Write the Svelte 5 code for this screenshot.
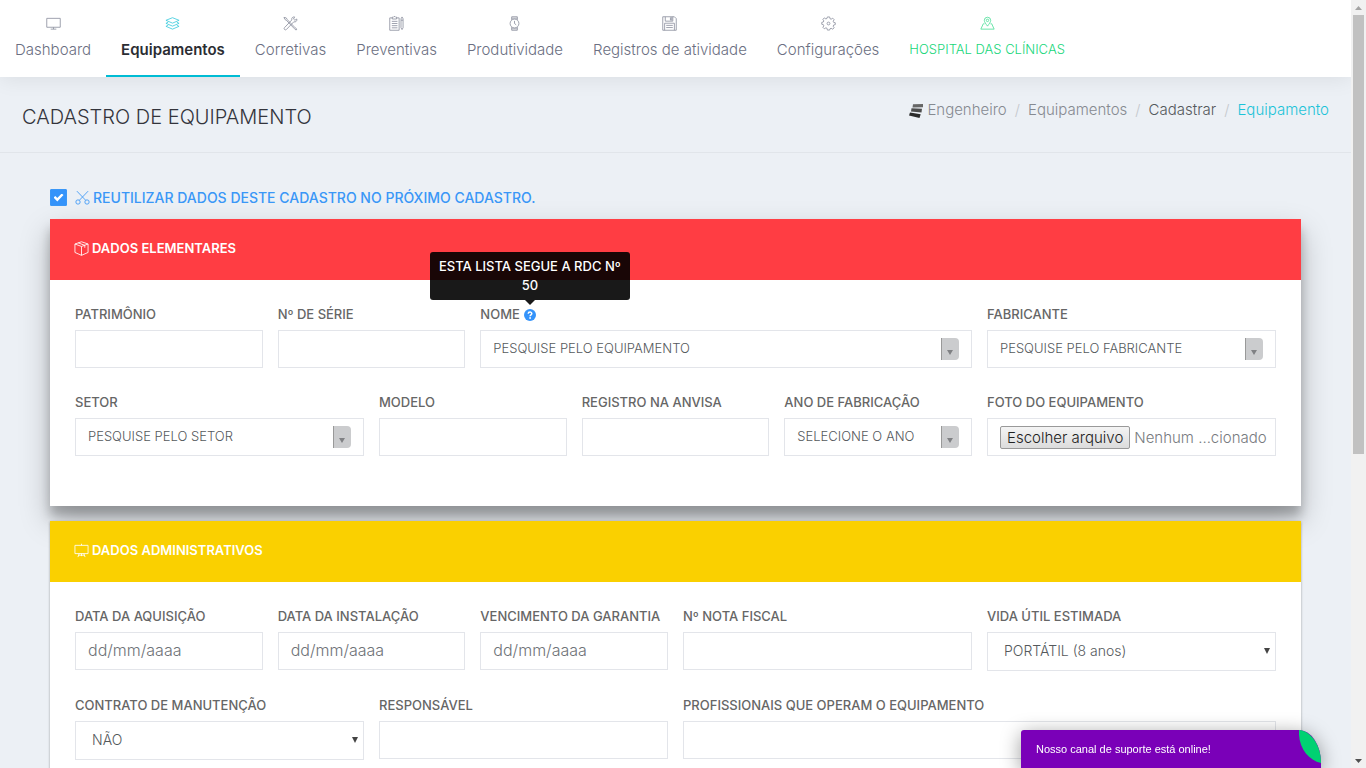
<script lang="ts">
  type Kind = "text" | "date" | "search" | "select" | "file";

  interface Field {
    id: string;
    label: string;
    span: number;
    kind: Kind;
    value?: string;
    help?: string;
  }

  interface Section {
    title: string;
    icon: string;
    tone: string;
    rows: Field[][];
  }

  const menu = [
    { label: "Dashboard", icon: "monitor" },
    { label: "Equipamentos", icon: "layers", active: true },
    { label: "Corretivas", icon: "tools" },
    { label: "Preventivas", icon: "notepad" },
    { label: "Produtividade", icon: "watch" },
    { label: "Registros de atividade", icon: "disk" },
    { label: "Configurações", icon: "gear" },
    { label: "HOSPITAL DAS CLÍNICAS", icon: "pin", place: true },
  ];

  const sections: Section[] = [
    {
      title: "DADOS ELEMENTARES",
      icon: "box",
      tone: "danger",
      rows: [
        [
          { id: "patrimonio", label: "PATRIMÔNIO", span: 2, kind: "text" },
          { id: "serie", label: "Nº DE SÉRIE", span: 2, kind: "text" },
          { id: "nome", label: "NOME", span: 5, kind: "search", value: "PESQUISE PELO EQUIPAMENTO", help: "ESTA LISTA SEGUE A RDC Nº 50" },
          { id: "fabricante", label: "FABRICANTE", span: 3, kind: "search", value: "PESQUISE PELO FABRICANTE" },
        ],
        [
          { id: "setor", label: "SETOR", span: 3, kind: "search", value: "PESQUISE PELO SETOR" },
          { id: "modelo", label: "MODELO", span: 2, kind: "text" },
          { id: "anvisa", label: "REGISTRO NA ANVISA", span: 2, kind: "text" },
          { id: "ano", label: "ANO DE FABRICAÇÃO", span: 2, kind: "search", value: "SELECIONE O ANO" },
          { id: "foto", label: "FOTO DO EQUIPAMENTO", span: 3, kind: "file" },
        ],
      ],
    },
    {
      title: "DADOS ADMINISTRATIVOS",
      icon: "easel",
      tone: "warning",
      rows: [
        [
          { id: "aquisicao", label: "DATA DA AQUISIÇÃO", span: 2, kind: "date" },
          { id: "instalacao", label: "DATA DA INSTALAÇÃO", span: 2, kind: "date" },
          { id: "garantia", label: "VENCIMENTO DA GARANTIA", span: 2, kind: "date" },
          { id: "nota", label: "Nº NOTA FISCAL", span: 3, kind: "text" },
          { id: "vida", label: "VIDA ÚTIL ESTIMADA", span: 3, kind: "select", value: "PORTÁTIL (8 anos)" },
        ],
        [
          { id: "contrato", label: "CONTRATO DE MANUTENÇÃO", span: 3, kind: "select", value: "NÃO" },
          { id: "responsavel", label: "RESPONSÁVEL", span: 3, kind: "text" },
          { id: "profissionais", label: "PROFISSIONAIS QUE OPERAM O EQUIPAMENTO", span: 6, kind: "text" },
        ],
      ],
    },
  ];

  let reuse = $state(true);
</script>

{#snippet icon(name: string)}
  <svg class="icon" viewBox="0 0 16 16" fill="none" stroke="currentColor" stroke-width="0.9" aria-hidden="true">
    {#if name === "monitor"}
      <path d="M0.8 2.5h14.4v9.5H0.8zM8 12v2M5 14h6" />
    {:else if name === "layers"}
      <path d="M8 1.8l7 2.8-7 3-7-3z" />
      <path d="M3.4 6.6L1 7.8l7 3 7-3-2.4-1.2M3.4 9.9L1 11l7 3 7-3-2.4-1.1" />
    {:else if name === "tools"}
      <path d="M1 1.5l2.4.5 1.3 2L13 12.6 14.8 14 14 15l-1.8-1.4L4 5 2 3.6z" />
      <path d="M14.7 3.2l-2 1.3-1.5-1.3L12.4 1c-2-.4-3.7 1.3-3 3.2L1.6 12.4c-1.3 1.3.7 3.3 2 2l7.9-8.2c2 .7 3.8-1 3.2-3z" />
    {:else if name === "notepad"}
      <path d="M3.5 2H.8v13.2h10V2H8M3.5 1.2h1.2L5.4.5h1l.7.7h1v2H3.5z" />
      <path d="M3 5.7h6M3 8h6M3 10.3h6M3 12.6h6M12.8 3l1.1-2L15 3v9.5l-1.1 2-1.1-2zM12.8 4.5H15" />
    {:else if name === "watch"}
      <circle cx="8" cy="8" r="4.7" />
      <path d="M5 4.2V.8h6v3.4M5 11.8v3.4h6v-3.4M8 5.2V8l1.8 1.4M5 2.3h6M5 13.7h6" />
    {:else if name === "disk"}
      <path d="M.8.8h12.4l2 2v12.4H.8zM3.5.8v4.7h8V.8M9 1.8h1.4v2.6H9zM2.8 15.2V7.7h10.4v7.5M4.5 10h7M4.5 12.3h7" />
    {:else if name === "gear"}
      <path d="M6.8 1h2.4l.4 1.9 1.2.5 1.7-1.1 1.5 1.6-1 1.7.5 1.2 1.7.4v2l-1.7.4-.5 1.3 1 1.6-1.5 1.6-1.7-1-1.2.5L9.2 15H6.8l-.4-1.9-1.2-.5-1.7 1L2 12.1l1-1.6-.5-1.3L.8 8.8v-2l1.7-.4L3 5.2 2 3.6 3.5 2l1.7 1.1 1.2-.5z" />
      <circle cx="8" cy="8" r="1.5" />
    {:else if name === "pin"}
      <path d="M8 10.8C6.3 8.4 4.6 6.5 4.6 4.7a3.4 3.4 0 0 1 6.8 0C11.4 6.5 9.7 8.4 8 10.8z" />
      <circle cx="8" cy="4.7" r="1.3" />
      <path d="M4.8 8.3H3.5L.9 14h14.2l-2.6-5.7h-1.3" />
    {:else if name === "box"}
      <path d="M8 .8l7 2.4v9L8 15.3l-7-3.1v-9zM1 3.2l7 2.6 7-2.6M8 5.8v9.5M4.5 2l7 2.6v2.6" />
    {:else if name === "easel"}
      <path d="M1 2.5h14v8.8H1zM8 .8v1.7M5.5 11.3L4.2 15M8 11.3V14M10.5 11.3l1.3 3.7M5 13h6" />
    {:else if name === "scissors"}
      <circle cx="3.2" cy="12.8" r="2.3" />
      <circle cx="12.8" cy="12.8" r="2.3" />
      <path d="M4.6 11L14 1.2M11.4 11L2 1.2" />
    {/if}
  </svg>
{/snippet}

<div class="window">
  <div class="page">
    <nav class="menu" aria-label="Principal">
      {#each menu as item}
        <a href="#{item.icon}" class:active={item.active} class:place={item.place}>
          {@render icon(item.icon)}
          <span>{item.label}</span>
        </a>
      {/each}
    </nav>

    <header class="page-header">
      <h1>CADASTRO DE EQUIPAMENTO</h1>
      <ol class="breadcrumb">
        <li>
          <a href="#engenheiro">
            <svg class="brand" viewBox="0 0 14 14" aria-hidden="true">
              <path d="M4 .2L14 0v3.2L3.5 3.4z" fill="#666" />
              <path d="M2.500 4.200l10.500.6-.5 3.600L2 7.400z" fill="#4c4c4c" />
              <path d="M1 8.400L11.700 10.200 10.500 14 0 11.500z" fill="#2b2b2b" />
            </svg>
            Engenheiro
          </a>
        </li>
        <li><a href="#equipamentos">Equipamentos</a></li>
        <li class="dark">Cadastrar</li>
        <li class="current" aria-current="page">Equipamento</li>
      </ol>
    </header>

    <main>
      <label class="reuse">
        <input type="checkbox" bind:checked={reuse} />
        {@render icon("scissors")}
        <span>REUTILIZAR DADOS DESTE CADASTRO NO PRÓXIMO CADASTRO.</span>
      </label>

      {#each sections as section}
        <section class="card {section.tone}">
          <h2>
            {@render icon(section.icon)}
            {section.title}
          </h2>
          <div class="card-body">
            {#each section.rows as row}
              <div class="row">
                {#each row as field}
                  <div class="field span-{field.span}">
                    <div class="caption">
                      <label for={field.id}>{field.label}</label>
                      {#if field.help}
                        <button type="button" class="help" aria-describedby="{field.id}-tip" aria-label="Ajuda">
                          <svg viewBox="0 0 12 12" aria-hidden="true">
                            <circle cx="6" cy="6" r="6" fill="currentColor" />
                            <path d="M4.2 4.7C4.3 2.6 7.8 2.6 7.8 4.6 7.8 5.9 6.1 5.8 6.1 7.2" fill="none" stroke="#fff" stroke-width="1.5" />
                            <circle cx="6.1" cy="9" r="0.9" fill="#fff" />
                          </svg>
                          <span class="tooltip" role="tooltip" id="{field.id}-tip">{field.help}</span>
                        </button>
                      {/if}
                    </div>
                    {#if field.kind === "search" || field.kind === "select"}
                      <div class="picker {field.kind}">
                        <select id={field.id} class="control">
                          <option>{field.value}</option>
                        </select>
                        <span class="arrow"></span>
                      </div>
                    {:else if field.kind === "file"}
                      <div class="control file">
                        <input id={field.id} type="file" />
                        <label class="file-button" for={field.id}>Escolher arquivo</label>
                        <span>Nenhum ...cionado</span>
                      </div>
                    {:else}
                      <input
                        id={field.id}
                        class="control"
                        type="text"
                        placeholder={field.kind === "date" ? "dd/mm/aaaa" : undefined}
                      />
                    {/if}
                  </div>
                {/each}
              </div>
            {/each}
          </div>
        </section>
      {/each}
    </main>
  </div>

  <div class="scrollbar" aria-hidden="true">
    <span class="up"></span>
    <span class="thumb"></span>
    <span class="down"></span>
  </div>

  <button type="button" class="chat">
    Nosso canal de suporte está online!
    <svg viewBox="0 0 22 33" aria-hidden="true">
      <path d="M0 0C12 1 22 15 22 33C9 30 -1 17 0 0z" fill="#00d172" />
    </svg>
  </button>
</div>

<style>
  :global(body) {
    background: #ecf0f5;
  }

  .window {
    display: flex;
    height: 100vh;
    overflow: hidden;
    font: 300 14px/21px Inter, "Open Sans", sans-serif;
    color: #55595c;
  }
  .window *,
  .window *::before {
    box-sizing: border-box;
  }
  .page {
    flex: 1;
    min-width: 0;
    overflow: auto;
    scrollbar-width: none;
  }
  a {
    color: inherit;
    text-decoration: none;
  }
  .icon {
    width: 15px;
    height: 15px;
    flex: none;
  }

  .menu {
    display: flex;
    height: 77px;
    background: #fff;
    box-shadow: 0 2px 20px rgba(0, 0, 0, 0.08);
    position: relative;
  }
  .menu a {
    display: flex;
    flex-direction: column;
    align-items: center;
    gap: 8px;
    padding: 16px 15px 0;
    border-bottom: 2px solid transparent;
    color: #6b6f82;
    font-size: 15px;
    white-space: nowrap;
  }
  .menu .icon {
    opacity: 0.75;
  }
  .menu .active {
    border-color: #00bcd4;
    color: #2b2d33;
    font-weight: 600;
  }
  .menu .active .icon {
    color: #00bcd4;
  }
  .menu .place {
    color: #16d67a;
    font-size: 13px;
  }

  .page-header {
    display: flex;
    justify-content: space-between;
    height: 76px;
    padding: 22px;
    border-bottom: 1px solid #e1e5ea;
  }
  h1 {
    margin: 0;
    font-size: 20px;
    line-height: 36px;
    font-weight: 300;
    color: #33343c;
  }
  .breadcrumb {
    display: flex;
    margin: 0;
    padding: 0;
    list-style: none;
    font-size: 15px;
    color: #868a91;
  }
  .breadcrumb li + li::before {
    content: "/";
    padding: 0 8px;
    color: #c5c8cd;
  }
  .breadcrumb .dark {
    color: #55595c;
  }
  .breadcrumb .current {
    color: #1cc3d8;
  }
  .brand {
    width: 14px;
    height: 14px;
    vertical-align: -3px;
  }

  main {
    padding: 34px 50px;
  }
  .reuse {
    display: flex;
    align-items: center;
    gap: 3px;
    width: fit-content;
    margin-bottom: 11px;
    color: #3a97f7;
    font-weight: 500;
  }
  .reuse input {
    appearance: none;
    width: 17px;
    height: 17px;
    margin: 0 5px 0 0;
    border: 1px solid #3a97f7;
    border-radius: 1px;
    background: #fff;
  }
  .reuse input:checked {
    display: grid;
    place-items: center;
    background: #3493fa;
  }
  .reuse input:checked::before {
    content: "";
    width: 10px;
    height: 8px;
    background: #fff;
    clip-path: polygon(0 50%, 18% 30%, 38% 55%, 82% 0, 100% 20%, 38% 100%);
  }

  .card {
    margin-bottom: 15px;
    background: #fff;
    box-shadow: 0 1px 3px rgba(0, 0, 0, 0.12), 0 1px 2px rgba(0, 0, 0, 0.24);
  }
  .card.danger {
    box-shadow: 0 14px 28px rgba(0, 0, 0, 0.25), 0 10px 10px rgba(0, 0, 0, 0.22);
  }
  .card.warning {
    position: relative;
  }
  h2 {
    display: flex;
    align-items: center;
    gap: 3px;
    margin: 0;
    padding: 19px 24px 21px;
    font-size: 13px;
    line-height: 21px;
    font-weight: 600;
    color: #fff;
  }
  .danger h2 {
    background: #ff3d43;
  }
  .warning h2 {
    background: #fad000;
  }
  .card-body {
    display: grid;
    gap: 24px;
    padding: 24px 25px 50px;
  }
  .row {
    display: grid;
    grid-template-columns: repeat(12, minmax(0, 1fr));
    gap: 15px;
  }
  .span-2 {
    grid-column: span 2;
  }
  .span-3 {
    grid-column: span 3;
  }
  .span-5 {
    grid-column: span 5;
  }
  .span-6 {
    grid-column: span 6;
  }
  .caption {
    display: flex;
    align-items: center;
    gap: 4px;
    margin-bottom: 5px;
    font-size: 13px;
    font-weight: 500;
    color: #666;
    white-space: nowrap;
  }

  .control {
    display: block;
    width: 100%;
    height: 38px;
    padding: 0 12px 2px;
    border: 1px solid #e3e5ea;
    border-radius: 0;
    background: #fff;
    font: inherit;
    color: inherit;
  }
  input.control {
    font-size: 16px;
  }
  .control::placeholder {
    color: #6f7378;
    opacity: 1;
  }
  .picker {
    position: relative;
  }
  .picker .control {
    appearance: none;
  }
  .search .control {
    font-size: 13px;
  }
  .select .control {
    height: 39px;
    padding: 0 16px 2px;
  }
  .arrow {
    position: absolute;
    pointer-events: none;
  }
  .arrow::before {
    content: "";
    display: block;
    width: 6px;
    height: 6px;
    background: #444;
    clip-path: polygon(0 0, 100% 0, 50% 100%);
  }
  .select .arrow {
    top: 16px;
    right: 6px;
  }
  .search .arrow {
    top: 8px;
    right: 13px;
    width: 18px;
    height: 22px;
    padding: 12px 5px 0;
    border-left: 1px solid #999;
    border-radius: 0 4px 4px 0;
    background: #cbccce;
  }
  .search .arrow::before {
    height: 5px;
    background: #808184;
  }

  .file {
    display: flex;
    align-items: center;
    gap: 4px;
    position: relative;
    padding: 0 12px;
    font-size: 15px;
    color: #777b80;
    white-space: nowrap;
    overflow: hidden;
  }
  .file input {
    position: absolute;
    width: 1px;
    height: 1px;
    opacity: 0;
  }
  .file-button {
    padding: 0 6px;
    border: 1px solid #999;
    border-radius: 2px;
    background: linear-gradient(#f4f4f4, #dcdcdc);
    color: #222;
  }

  .help {
    position: relative;
    display: flex;
    padding: 0;
    border: 0;
    background: none;
    color: #3493fa;
  }
  .help svg {
    width: 12px;
    height: 12px;
  }
  .tooltip {
    position: absolute;
    bottom: 21px;
    left: 50%;
    z-index: 1;
    width: 200px;
    padding: 5px 8px;
    transform: translateX(-50%);
    border-radius: 3px;
    background: rgba(0, 0, 0, 0.9);
    color: #fff;
    font: 500 13px/19px Inter, "Open Sans", sans-serif;
    text-align: center;
    white-space: normal;
  }
  .tooltip::after {
    content: "";
    position: absolute;
    top: 100%;
    left: 50%;
    transform: translateX(-50%);
    border: 5px solid transparent;
    border-top-color: rgba(0, 0, 0, 0.9);
    border-bottom: 0;
  }

  .scrollbar {
    display: flex;
    flex-direction: column;
    width: 15px;
    padding: 6px 2px 5px;
    align-items: center;
    background: #f1f1f1;
  }
  .scrollbar .up,
  .scrollbar .down {
    width: 7px;
    height: 4px;
    background: #a3a3a3;
    clip-path: polygon(50% 0, 100% 100%, 0 100%);
  }
  .scrollbar .down {
    margin-top: auto;
    background: #505050;
    clip-path: polygon(0 0, 100% 0, 50% 100%);
  }
  .scrollbar .thumb {
    width: 100%;
    height: 58%;
    margin-top: 5px;
    background: #c1c1c1;
  }

  .chat {
    position: fixed;
    right: 45px;
    bottom: 0;
    z-index: 2;
    width: 300px;
    height: 38px;
    padding: 0 15px;
    border: 0;
    border-radius: 3px 22px 0 0 / 3px 33px 0 0;
    background: #7a00b8;
    box-shadow: 0 4px 20px rgba(0, 0, 0, 0.4);
    color: #fff;
    font: 11px/20px "Liberation Sans", Arial, sans-serif;
    text-align: left;
  }
  .chat svg {
    position: absolute;
    top: 0;
    right: 0;
    width: 22px;
    height: 33px;
  }
</style>
